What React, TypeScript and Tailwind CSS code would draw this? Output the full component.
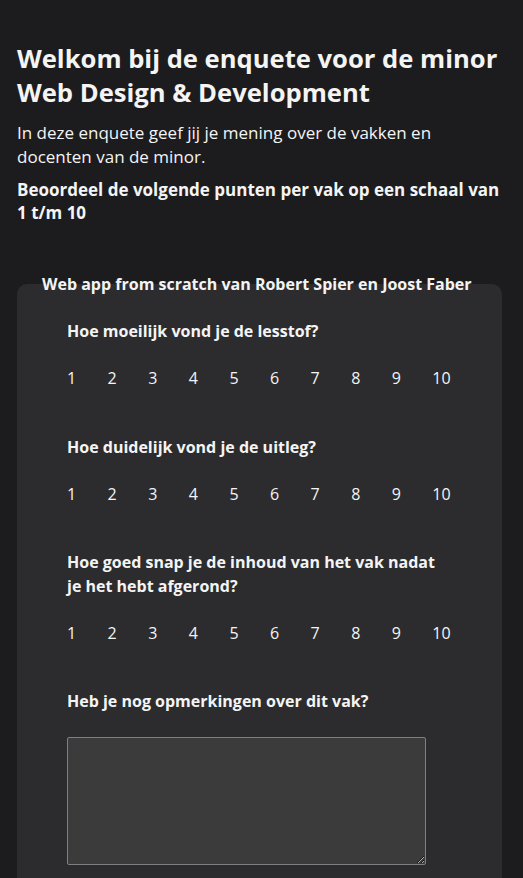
const questions = [
  "Hoe moeilijk vond je de lesstof?",
  "Hoe duidelijk vond je de uitleg?",
  "Hoe goed snap je de inhoud van het vak nadat je het hebt afgerond?",
];

function Scale({ name }: { name: string }) {
  return (
    <div className="flex mt-[23px]">
      {Array.from({ length: 10 }).map((_, i) => (
        <label key={i} className="w-[40.6px] shrink-0 cursor-pointer">
          <input type="radio" name={name} className="sr-only" />
          <span>{i + 1}</span>
        </label>
      ))}
    </div>
  );
}

const gaps = ["mt-[23px]", "mt-[45px]", "mt-[44px]"];

export default function App() {
  return (
    <div
      className="min-h-screen bg-[#1c1c1e] text-[#f4f4f5] px-[17px] pt-[42px] pb-10"
      style={{ fontFamily: '"Open Sans", sans-serif' }}
    >
      <h1 className="text-[25.6px] font-bold leading-[34px]">
        Welkom bij de enquete voor de minor Web Design &amp; Development
      </h1>
      <p className="text-[17px] leading-[24px] mt-[11px]">
        In deze enquete geef jij je mening over de vakken en docenten van de minor.
      </p>
      <p className="text-[17px] font-bold leading-[23px] mt-[9px]">
        Beoordeel de volgende punten per vak op een schaal van 1 t/m 10
      </p>

      <fieldset className="mt-[48px] mr-[4px] bg-[#2c2c2e] rounded-[10px] pl-[50px] pr-6 pb-10">
        <legend className="text-[16px] font-bold -ml-[25px]">
          Web app from scratch van Robert Spier en Joost Faber
        </legend>
        {questions.map((q, i) => (
          <div key={i} className={gaps[i]}>
            <p className="text-[16px] font-bold leading-[24px] max-w-[375px]">{q}</p>
            <Scale name={`q${i}`} />
          </div>
        ))}
        <div className="mt-[44px]">
          <p className="text-[16px] font-bold leading-[24px]">
            Heb je nog opmerkingen over dit vak?
          </p>
          <textarea className="block mt-[24px] w-[359px] h-[128px] bg-[#3b3b3b] border border-[#808080] rounded-[2px] text-[#f4f4f5] p-2" />
        </div>
      </fieldset>
    </div>
  );
}
